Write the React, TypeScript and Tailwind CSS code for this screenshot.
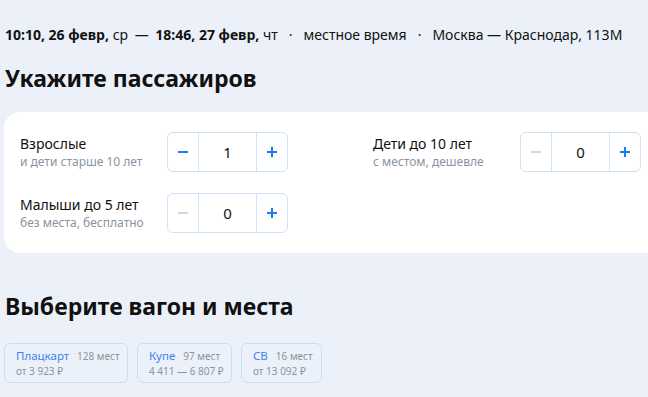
const font = "font-['Noto_Sans','Open_Sans',sans-serif]";

type Counter = { title: string; sub: string; value: number; canDec: boolean };

const counters: Counter[] = [
  { title: "Взрослые", sub: "и дети старше 10 лет", value: 1, canDec: true },
  { title: "Дети до 10 лет", sub: "с местом, дешевле", value: 0, canDec: false },
  { title: "Малыши до 5 лет", sub: "без места, бесплатно", value: 0, canDec: false },
];

const wagons = [
  { name: "Плацкарт", seats: "128 мест", price: "от 3 923 ₽", w: "w-[124px]" },
  { name: "Купе", seats: "97 мест", price: "4 411 — 6 807 ₽", w: "w-[95px]" },
  { name: "СВ", seats: "16 мест", price: "от 13 092 ₽", w: "w-[81px]" },
];

function Stepper({ value, canDec }: { value: number; canDec: boolean }) {
  return (
    <div className="flex h-[40px] w-[121px] shrink-0 rounded-[6px] border border-[#cfe2fb] bg-white">
      <button
        type="button"
        className={`flex w-[31px] items-center justify-center border-r border-[#cfe2fb] ${
          canDec ? "text-[#1a7cf0]" : "text-[#c9ced6]"
        }`}
      >
        <svg width="12" height="12" viewBox="0 0 12 12">
          <path d="M1 6h10" stroke="currentColor" strokeWidth={canDec ? 2 : 1.6} />
        </svg>
      </button>
      <div className="flex flex-1 items-center justify-center text-[15px] text-[#111]">{value}</div>
      <button
        type="button"
        className="flex w-[31px] items-center justify-center border-l border-[#cfe2fb] text-[#1a7cf0]"
      >
        <svg width="12" height="12" viewBox="0 0 12 12">
          <path d="M1 6h10M6 1v10" stroke="currentColor" strokeWidth="2" />
        </svg>
      </button>
    </div>
  );
}

function CounterRow({ c }: { c: Counter }) {
  return (
    <div className="flex w-[268px] items-center justify-between">
      <div className="flex flex-col">
        <span className="text-[14px] leading-[20px] text-[#111]">{c.title}</span>
        <span className="text-[12px] leading-[16px] text-[#8b93a1]">{c.sub}</span>
      </div>
      <Stepper value={c.value} canDec={c.canDec} />
    </div>
  );
}

export default function App() {
  return (
    <div className={`min-h-screen overflow-hidden bg-[#ecf1f9] ${font} text-[#111]`}>
      <div className="pl-[5px] pt-[25px]">
        <p className="flex whitespace-nowrap text-[14px] leading-[20px]">
          <span>
            <span className="font-bold">10:10, 26 февр,</span> ср <span className="px-[3px]">—</span>{" "}
            <span className="font-bold">18:46, 27 февр,</span> чт
          </span>
          <span className="px-[11px]">·</span>
          <span>местное время</span>
          <span className="px-[11px]">·</span>
          <span>Москва — Краснодар, 113М</span>
        </p>
        <h1 className="mt-[17px] text-[23px] font-bold leading-[32px]">Укажите пассажиров</h1>
      </div>

      <div className="ml-[4px] mt-[18px] mr-[-20px] rounded-[16px] bg-white px-[16px] py-[20px]">
        <div className="grid grid-cols-[268px_268px] gap-x-[85px] gap-y-[21px]">
          {counters.map((c) => (
            <CounterRow key={c.title} c={c} />
          ))}
        </div>
      </div>

      <h2 className="mt-[37px] pl-[5px] text-[23px] font-bold leading-[32px]">Выберите вагон и места</h2>

      <div className="ml-[4px] mt-[21px] flex gap-[9px]">
        {wagons.map((w) => (
          <div
            key={w.name}
            className={`${w.w} h-[40px] rounded-[6px] border border-[#c9ddf8] px-[11px] pt-[4px]`}
          >
            <div className="flex items-baseline gap-[8px] whitespace-nowrap">
              <span className="text-[11.5px] leading-[16px] text-[#3b82f0]">{w.name}</span>
              <span className="text-[10px] leading-[14px] text-[#8b93a1]">{w.seats}</span>
            </div>
            <div className="whitespace-nowrap text-[10px] leading-[14px] text-[#8b93a1]">{w.price}</div>
          </div>
        ))}
      </div>
    </div>
  );
}
